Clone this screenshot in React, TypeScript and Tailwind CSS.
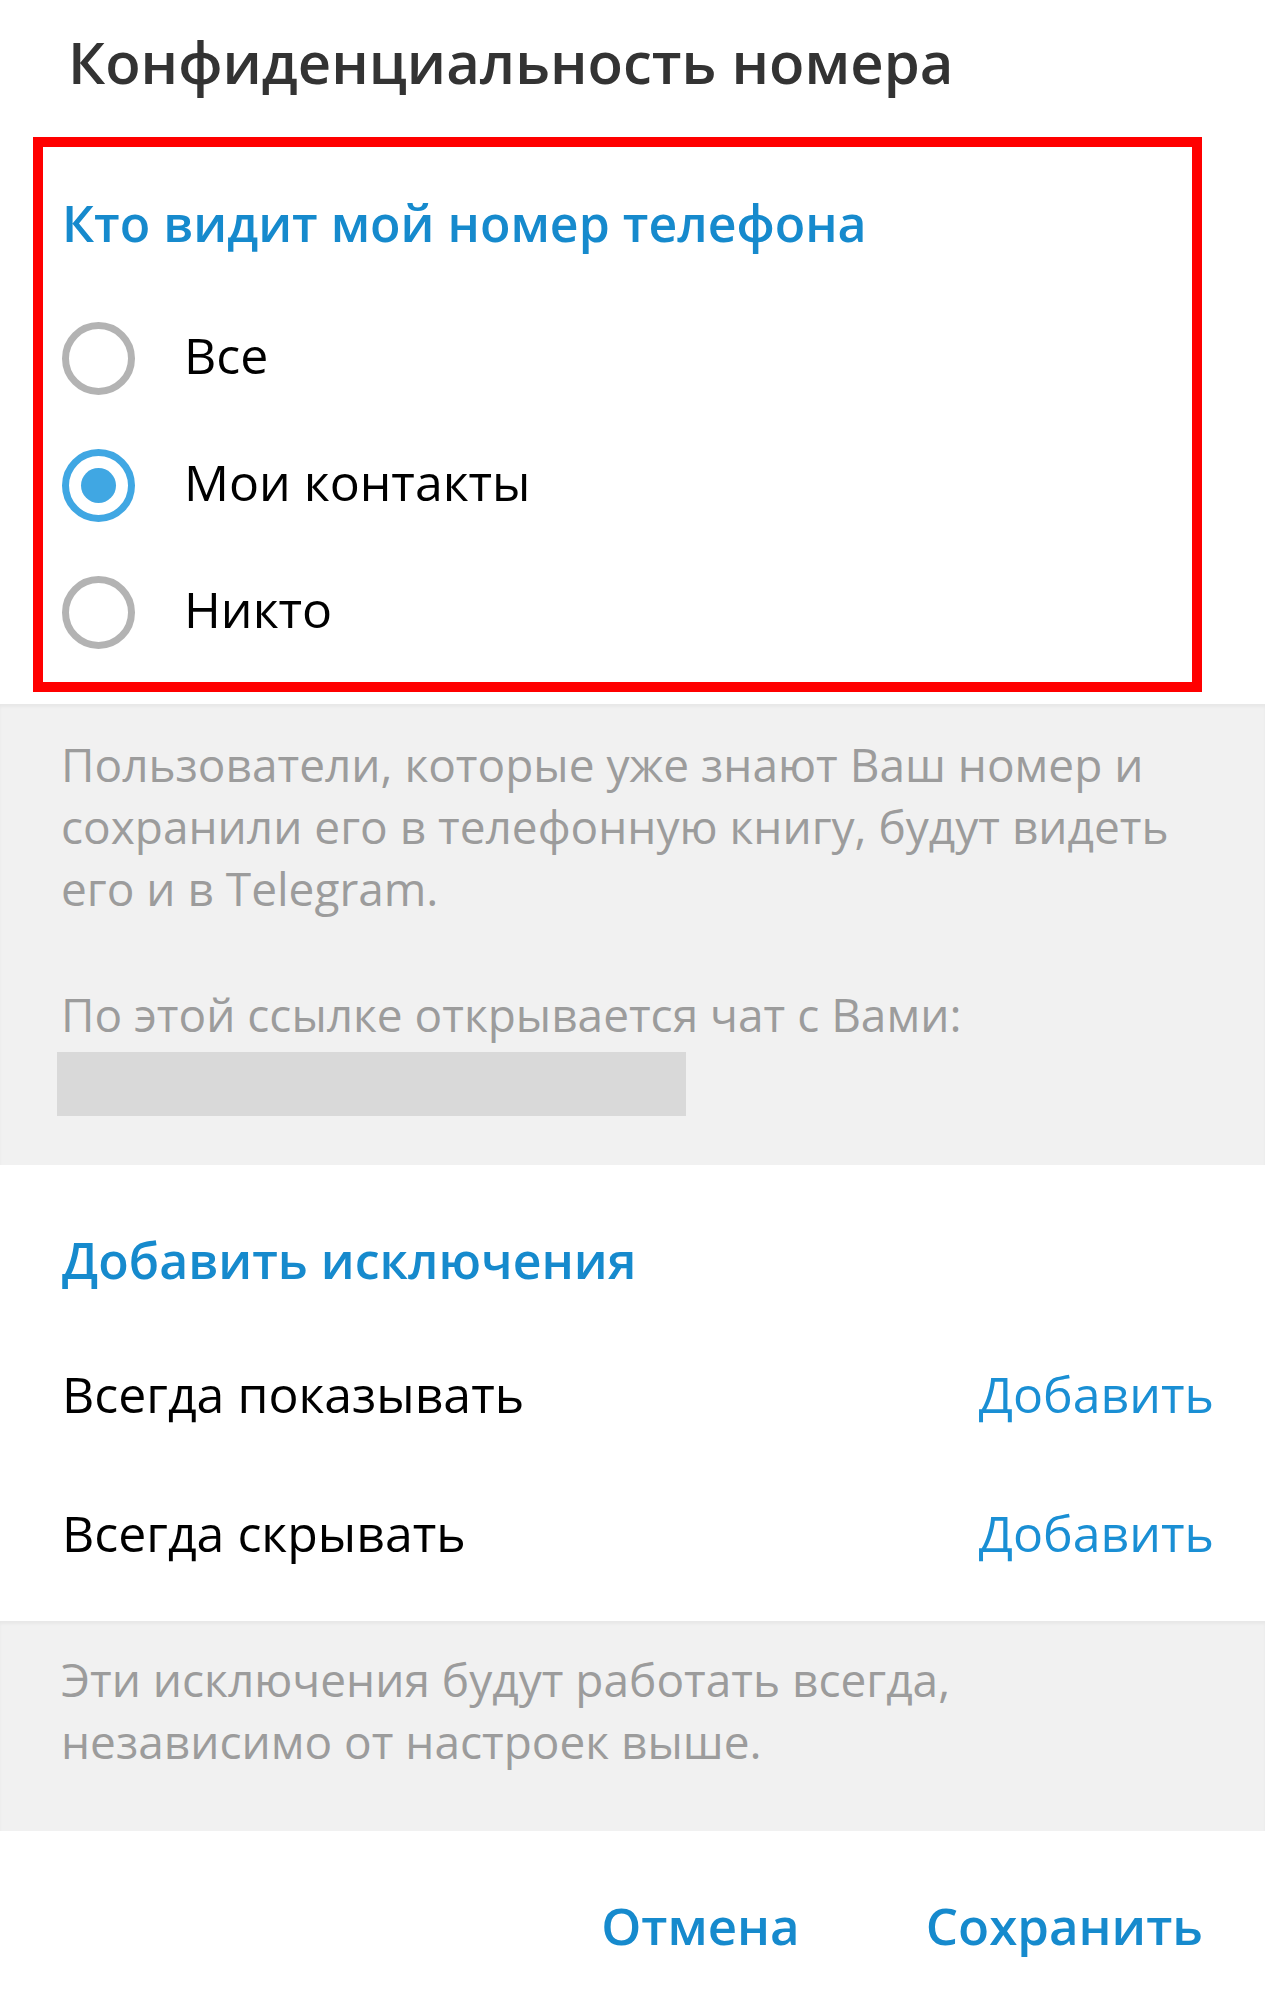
import React, { useState } from 'react';

const options = ['Все', 'Мои контакты', 'Никто'];

const Radio: React.FC<{ checked: boolean }> = ({ checked }) => (
  <div
    className={`flex h-[73px] w-[73px] shrink-0 items-center justify-center rounded-full border-[7px] ${
      checked ? 'border-[#40a7e3]' : 'border-[#b3b3b3]'
    }`}
  >
    {checked && <div className="h-[35px] w-[35px] rounded-full bg-[#40a7e3]" />}
  </div>
);

const ExceptionRow: React.FC<{ label: string }> = ({ label }) => (
  <div className="flex items-center justify-between">
    <span className="text-[50px] leading-[64px] text-black">{label}</span>
    <button className="text-[50px] leading-[64px] text-[#1a8fd4]">Добавить</button>
  </div>
);

const App: React.FC = () => {
  const [selected, setSelected] = useState<number>(1);

  return (
    <div className="min-h-[1999px] w-full bg-white font-['Open_Sans',sans-serif]">
      {/* who can see */}
      <section className="pb-[12px] pt-[24px]">
        <h1 className="pl-[68px] text-[58px] font-semibold leading-[76px] text-[#333333]">
          Конфиденциальность номера
        </h1>
        <div className="ml-[33px] mt-[37px] w-[1169px] border-[10px] border-[#ff0000] pb-[6px] pl-[19px] pt-[44px]">
          <h2 className="text-[50px] font-semibold leading-[64px] text-[#168acd]">
            Кто видит мой номер телефона
          </h2>
          <div className="mt-[40px]">
            {options.map((option, index) => (
              <div
                key={option}
                onClick={() => setSelected(index)}
                className="flex h-[127px] cursor-pointer items-center gap-[49px]"
              >
                <Radio checked={selected === index} />
                <span className="mb-[7px] text-[50px] leading-[64px] text-black">{option}</span>
              </div>
            ))}
          </div>
        </div>
      </section>

      <section className="bg-[#f1f1f1] pb-[49px] pl-[61px] pt-[29px] shadow-[inset_0_3px_3px_rgba(0,0,0,0.04)]">
        <p className="text-[46px] leading-[62px] text-[#9c9c9c]">
          Пользователи, которые уже знают Ваш номер и
          <br />
          сохранили его в телефонную книгу, будут видеть
          <br />
          его и в Telegram.
        </p>
        <p className="mt-[64px] text-[46px] leading-[62px] text-[#9c9c9c]">
          По этой ссылке открывается чат с Вами:
        </p>
        <div className="-ml-[4px] mt-[7px] h-[64px] w-[629px] bg-[#d9d9d9]" />
      </section>

      {/* exceptions */}
      <section className="pb-[56px] pl-[62px] pr-[51px] pt-[63px]">
        <h2 className="text-[50px] font-semibold leading-[64px] text-[#168acd]">
          Добавить исключения
        </h2>
        <div className="mt-[70px] flex flex-col gap-[75px]">
          <ExceptionRow label="Всегда показывать" />
          <ExceptionRow label="Всегда скрывать" />
        </div>
      </section>

      <section className="bg-[#f1f1f1] pb-[59px] pl-[61px] pt-[27px] shadow-[inset_0_3px_3px_rgba(0,0,0,0.04)]">
        <p className="text-[46px] leading-[62px] text-[#9c9c9c]">
          Эти исключения будут работать всегда,
          <br />
          независимо от настроек выше.
        </p>
      </section>

      <footer className="flex justify-end gap-[126px] pr-[62px] pt-[62px]">
        <button className="text-[51px] font-semibold leading-[64px] text-[#168acd]">Отмена</button>
        <button className="text-[51px] font-semibold leading-[64px] text-[#168acd]">Сохранить</button>
      </footer>
    </div>
  );
};

export default App;
